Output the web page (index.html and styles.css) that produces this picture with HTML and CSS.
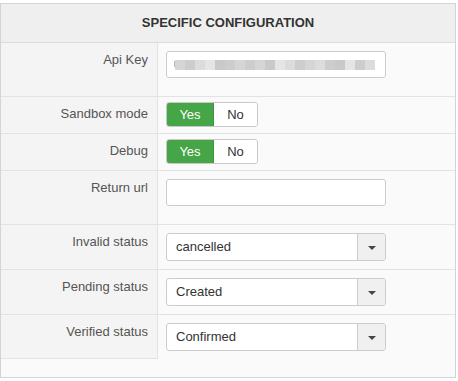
FILE: index.html
```html
<!DOCTYPE html>
<html>
<head>
<meta charset="utf-8">
<link rel="stylesheet" href="styles.css">
</head>
<body>
<div class="panel">
  <div class="panel-head">SPECIFIC CONFIGURATION</div>
  <div class="form">
    <div class="key">Api Key</div>
    <div class="field field-input">
      <div class="input masked">
        <span class="tick"></span>
        <span class="b c1"></span><span class="b c2"></span><span class="b c3"></span><span class="b c4"></span><span class="b c5"></span><span class="b c2"></span><span class="b c1"></span><span class="b c2"></span><span class="b c1"></span><span class="b c5"></span><span class="b c4"></span><span class="b c3"></span><span class="b c2"></span><span class="b c1"></span><span class="b c3"></span><span class="b c2"></span><span class="b c5"></span><span class="b c4"></span><span class="b c2"></span><span class="b c3"></span>
      </div>
    </div>

    <div class="key">Sandbox mode</div>
    <div class="field field-toggle">
      <div class="toggle"><span class="opt yes">Yes</span><span class="opt no">No</span></div>
    </div>

    <div class="key">Debug</div>
    <div class="field field-toggle">
      <div class="toggle"><span class="opt yes">Yes</span><span class="opt no">No</span></div>
    </div>

    <div class="key">Return url</div>
    <div class="field field-input">
      <div class="input"></div>
    </div>

    <div class="key">Invalid status</div>
    <div class="field field-select">
      <div class="select"><span class="select-text">cancelled</span><span class="select-arrow"><span class="caret"></span></span></div>
    </div>

    <div class="key">Pending status</div>
    <div class="field field-select">
      <div class="select"><span class="select-text">Created</span><span class="select-arrow"><span class="caret"></span></span></div>
    </div>

    <div class="key last">Verified status</div>
    <div class="field field-select last">
      <div class="select"><span class="select-text">Confirmed</span><span class="select-arrow"><span class="caret"></span></span></div>
    </div>
  </div>
</div>
</body>
</html>
```

FILE: styles.css
```css
html, body {
  margin: 0;
  padding: 0;
  background: #ffffff;
}

body {
  font-family: "Liberation Sans", Arial, sans-serif;
  font-size: 13px;
  color: #333;
}

.panel {
  margin-top: 3px;
  width: 456px;
  box-sizing: border-box;
  border: 1px solid #d4d4d4;
  background: #fafafa;
  padding-bottom: 18px;
}

.panel-head {
  height: 38px;
  line-height: 38px;
  background: #efefef;
  border-bottom: 1px solid #dcdcdc;
  text-align: center;
  font-weight: bold;
  font-size: 13px;
  color: #333;
}

.form {
  display: grid;
  grid-template-columns: 157px 1fr;
}

.key {
  box-sizing: border-box;
  background: #f4f4f4;
  border-right: 1px solid #e3e3e3;
  border-bottom: 1px solid #e3e3e3;
  text-align: right;
  padding: 8px 9px 0 0;
  line-height: 18px;
  color: #555;
}

.field {
  border-bottom: 1px solid #e3e3e3;
  padding-left: 8px;
}

.field.last {
  border-bottom: none;
}

.field-input {
  padding-top: 8px;
  padding-bottom: 18px;
}

.field-toggle {
  padding-top: 5px;
  padding-bottom: 6px;
}

.field-select {
  padding-top: 8px;
  padding-bottom: 8px;
}

.input {
  box-sizing: border-box;
  width: 220px;
  height: 27px;
  background: #fff;
  border: 1px solid #cccccc;
  border-radius: 3px;
}

.masked {
  display: flex;
  align-items: center;
  padding-left: 7px;
}

.tick {
  width: 1px;
  height: 6px;
  background: #b9b9b9;
  margin-right: 0;
  align-self: center;
  margin-top: -2px;
}

.b {
  width: 10px;
  height: 10px;
}
.c1 { background: #d5d5d5; }
.c2 { background: #cdcdcd; }
.c3 { background: #dcdcdc; }
.c4 { background: #e3e6e8; }
.c5 { background: #c9c9c9; }

.toggle {
  display: inline-flex;
  height: 25px;
  box-sizing: border-box;
  border-radius: 3px;
  overflow: hidden;
  border: 1px solid #c8c8c8;
}

.opt {
  display: flex;
  align-items: center;
  justify-content: center;
  line-height: 23px;
}

.yes {
  width: 46px;
  background: #46a546;
  color: #fff;
  margin: -1px 0 -1px -1px;
  border: 1px solid #3f963f;
  height: 23px;
}

.no {
  width: 43px;
  background: #fff;
  color: #333;
}

.select {
  box-sizing: border-box;
  width: 220px;
  height: 28px;
  display: flex;
  background: #fff;
  border: 1px solid #cccccc;
  border-radius: 3px;
  overflow: hidden;
}

.select-text {
  flex: 1;
  padding-left: 9px;
  line-height: 26px;
  color: #333;
}

.select-arrow {
  width: 27px;
  background: #f0f0f0;
  border-left: 1px solid #cccccc;
  display: flex;
  align-items: center;
  justify-content: center;
}

.caret {
  width: 0;
  height: 0;
  border-left: 4px solid transparent;
  border-right: 4px solid transparent;
  border-top: 4px solid #444;
  margin-top: 1px;
}
```
